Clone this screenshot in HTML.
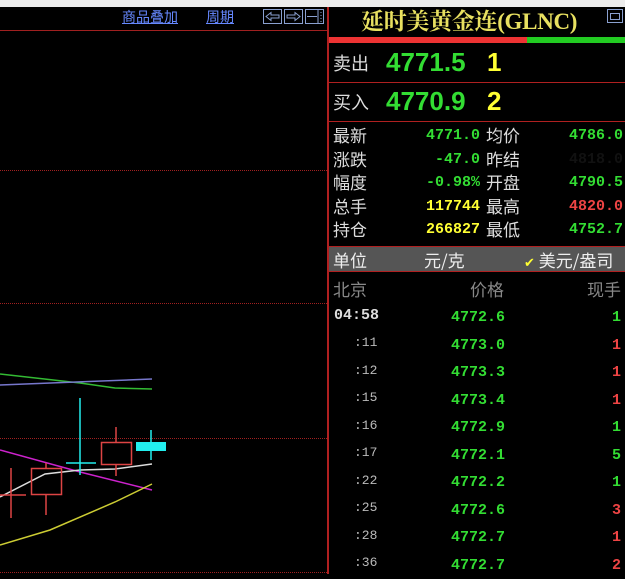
<!DOCTYPE html>
<html><head><meta charset="utf-8"><style>
*{margin:0;padding:0;box-sizing:border-box}
body{width:625px;height:574px;background:#000;overflow:hidden;position:relative;font-family:"Liberation Sans","Noto Sans CJK SC",sans-serif}
.a{position:absolute;white-space:nowrap}
.cn{font-family:"Noto Sans CJK SC",sans-serif;color:#ddd;font-size:17px;line-height:22px}
.num{font-family:"Liberation Mono","DejaVu Sans Mono",monospace;font-weight:bold;font-size:14px;line-height:22px;text-align:right}
.g{color:#33dd33}.y{color:#ffff33}.r{color:#ee4444}.w{color:#ddd}
.dot{position:absolute;left:0;width:327px;height:0;border-top:1px dotted #a02020}
</style></head><body>
<div class="a" style="left:0;top:0;width:625px;height:7px;background:#ececec"></div>
<div class="a" style="left:122px;top:8px;font-size:14px;color:#6688ff;text-decoration:underline;font-family:'Noto Sans CJK SC',sans-serif;line-height:18px">商品叠加</div>
<div class="a" style="left:206px;top:8px;font-size:14px;color:#6688ff;text-decoration:underline;font-family:'Noto Sans CJK SC',sans-serif;line-height:18px">周期</div>
<svg class="a" style="left:262px;top:8px" width="64" height="18">
<g fill="none" stroke="#8aa0d0" stroke-width="1">
<rect x="1.5" y="1.5" width="18" height="14"/><rect x="22.5" y="1.5" width="18" height="14"/><rect x="43.5" y="1.5" width="18" height="14"/>
<path d="M4 8.5l5-4v2.5h8v3h-8v2.5z"/><path d="M38 8.5l-5-4v2.5h-8v3h8v2.5z"/>
<path d="M45 8.5h10M56 2v13"/><path d="M59 4v1M59 7v1M59 10v1M59 13v1"/></g></svg>
<div class="a" style="left:0;top:30px;width:327px;height:1px;background:#a02020"></div>
<div class="dot" style="top:170px"></div>
<div class="dot" style="top:303px"></div>
<div class="dot" style="top:438px"></div>
<div class="dot" style="top:572px"></div>
<div class="a" style="left:327px;top:7px;width:2px;height:567px;background:#b02020"></div>
<svg class="a" style="left:0;top:0" width="327" height="574">
<g fill="none" stroke-width="1.5">
<polyline stroke="#33bb33" points="0,374 80,383 115,388 152,389"/>
<polyline stroke="#7777cc" points="0,385 152,379"/>
<polyline stroke="#cc22cc" points="0,450 80,472 152,490"/>
<polyline stroke="#dddddd" points="0,497 45,474 80,470 115,469 152,464"/>
<polyline stroke="#cccc33" points="0,545 50,530 115,502 152,484"/>
<g stroke="#dd4444"><path d="M11 468V518M0 495H26"/><rect x="31.5" y="468.5" width="30" height="26"/><path d="M46 463V468M46 495V515"/><rect x="101.5" y="442.5" width="30" height="22"/><path d="M116 427V442M116 465V476"/></g>
<g stroke="#22eeee"><path d="M80 398V475M66 463H96M151 430V460"/></g>
</g>
<rect x="136" y="442" width="30" height="9" fill="#22eeee"/>
</svg>
<div class="a" style="left:361px;top:7px;font-family:'Liberation Serif','Noto Serif CJK SC',serif;font-size:23px;font-weight:bold;color:#e8e060;line-height:30px;letter-spacing:-0.3px">延时美黄金连(GLNC)</div>
<div class="a" style="left:607px;top:9px;width:16px;height:14px;border:1px solid #8aa0d0"><div style="margin:3px 2px;height:7px;border:1px solid #8aa0d0"></div></div>
<div class="a" style="left:329px;top:37px;width:198px;height:6px;background:#ee3333"></div>
<div class="a" style="left:527px;top:37px;width:98px;height:6px;background:#22cc22"></div>
<div class="a cn" style="left:333px;top:52px;font-size:18px">卖出</div>
<div class="a g" style="left:386px;top:46px;font-size:26px;font-weight:bold;line-height:32px">4771.5</div>
<div class="a y" style="left:487px;top:46px;font-size:26px;font-weight:bold;line-height:32px">1</div>
<div class="a" style="left:329px;top:82px;width:296px;height:1px;background:#b02020"></div>
<div class="a cn" style="left:333px;top:91px;font-size:18px">买入</div>
<div class="a g" style="left:386px;top:85px;font-size:26px;font-weight:bold;line-height:32px">4770.9</div>
<div class="a y" style="left:487px;top:85px;font-size:26px;font-weight:bold;line-height:32px">2</div>
<div class="a" style="left:329px;top:121px;width:296px;height:1px;background:#b02020"></div>
<div class="a cn" style="left:333px;top:123px;line-height:23.5px">最新<br>涨跌<br>幅度<br>总手<br>持仓</div>
<div class="a cn" style="left:486px;top:123px;line-height:23.5px">均价<br>昨结<br>开盘<br>最高<br>最低</div>
<div class="a num" style="right:145px;top:124px;line-height:23.5px;font-size:15px"><span class="g">4771.0</span><br><span class="g">-47.0</span><br><span class="g">-0.98%</span><br><span class="y">117744</span><br><span class="y">266827</span></div>
<div class="a num" style="right:2px;top:124px;line-height:23.5px;font-size:15px"><span class="g">4786.0</span><br><span style="color:#111">4818.0</span><br><span class="g">4790.5</span><br><span class="r">4820.0</span><br><span class="g">4752.7</span></div>
<div class="a" style="left:329px;top:246px;width:296px;height:26px;background:#555;border-top:1px solid #b02020;border-bottom:1px solid #b02020"></div>
<div class="a cn" style="left:333px;top:249px;color:#eee">单位</div>
<div class="a cn" style="left:424px;top:249px;color:#eee">元/克</div>
<div class="a cn" style="left:524px;top:249px;color:#eee"><span style="color:#ffff33;font-size:13px">✔</span> 美元/盎司</div>
<div class="a cn" style="left:333px;top:278px;color:#888">北京</div>
<div class="a cn" style="left:470px;top:278px;color:#888">价格</div>
<div class="a cn" style="left:587px;top:278px;color:#888">现手</div>
<div class="a num w" style="left:334px;top:305px;font-size:15px">04:58</div>
<div class="a" style="left:329px;top:329px;width:296px;font-family:'Liberation Mono',monospace;font-size:13px;line-height:27.5px;color:#bbb">
<div style="padding-left:25px">:11<br>:12<br>:15<br>:16<br>:17<br>:22<br>:25<br>:28<br>:36</div></div>
<div class="a num g" style="right:120px;top:304px;line-height:27.5px;font-size:15px">4772.6<br>4773.0<br>4773.3<br>4773.4<br>4772.9<br>4772.1<br>4772.2<br>4772.6<br>4772.7<br>4772.7</div>
<div class="a num" style="right:4px;top:304px;line-height:27.5px;font-size:15px"><span class="g">1</span><br><span class="r">1</span><br><span class="r">1</span><br><span class="r">1</span><br><span class="g">1</span><br><span class="g">5</span><br><span class="g">1</span><br><span class="r">3</span><br><span class="r">1</span><br><span class="r">2</span></div>
</body></html>
